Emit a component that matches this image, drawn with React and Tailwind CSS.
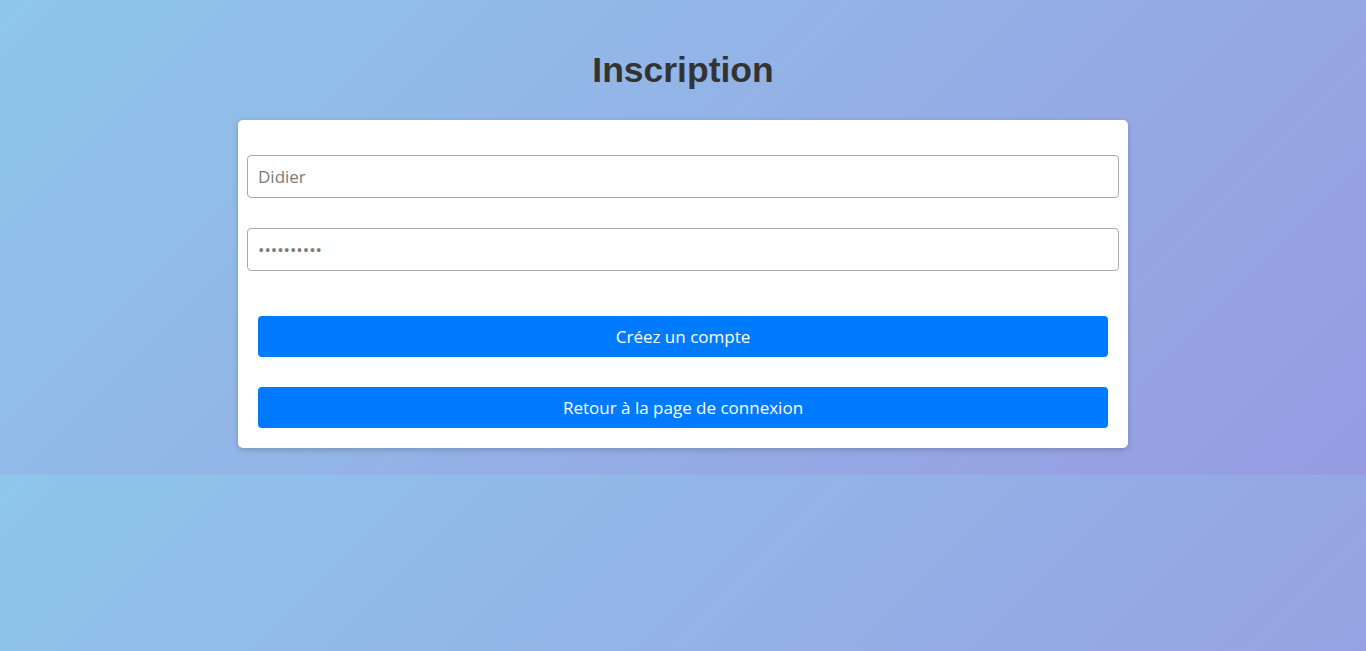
export default function App() {
  return (
    <div className="h-[651px] w-full overflow-hidden bg-linear-135 from-[#8ec6ea] to-[#979be2] bg-[length:100%_475px] bg-repeat-y">
      <div className="flex h-[475px] flex-col items-center pt-[49px]">
        <h1 className="text-[35.5px] font-bold leading-[42px] text-[#333] [font-family:'Liberation_Sans',Arial,sans-serif]">
          Inscription
        </h1>
        <form
          className="mt-[29px] w-[890px] rounded-[5px] bg-white pt-[35px] pb-[20px] px-[9px] shadow-[0_2px_6px_rgba(0,0,0,0.18)] [font-family:'Open_Sans',sans-serif]"
          onSubmit={(e) => e.preventDefault()}
        >
          <input
            type="text"
            placeholder="Didier"
            className="block h-[43px] w-full rounded-[4px] border border-[#aaa] px-[10px] text-[17px] text-[#555] placeholder:text-[#7a7a7a] outline-none"
          />
          <input
            type="password"
            defaultValue="motdepasse"
            className="mt-[30px] block h-[43px] w-full rounded-[4px] border border-[#aaa] px-[10px] text-[17px] text-[#7a7a7a] outline-none"
          />
          <div className="mt-[45px] flex flex-col gap-[30px] px-[11px]">
            <button
              type="submit"
              className="h-[41px] w-full rounded-[4px] bg-[#007bff] text-[17px] text-white"
            >
              Créez un compte
            </button>
            <button
              type="button"
              className="h-[41px] w-full rounded-[4px] bg-[#007bff] text-[17px] text-white"
            >
              Retour à la page de connexion
            </button>
          </div>
        </form>
      </div>
    </div>
  );
}
